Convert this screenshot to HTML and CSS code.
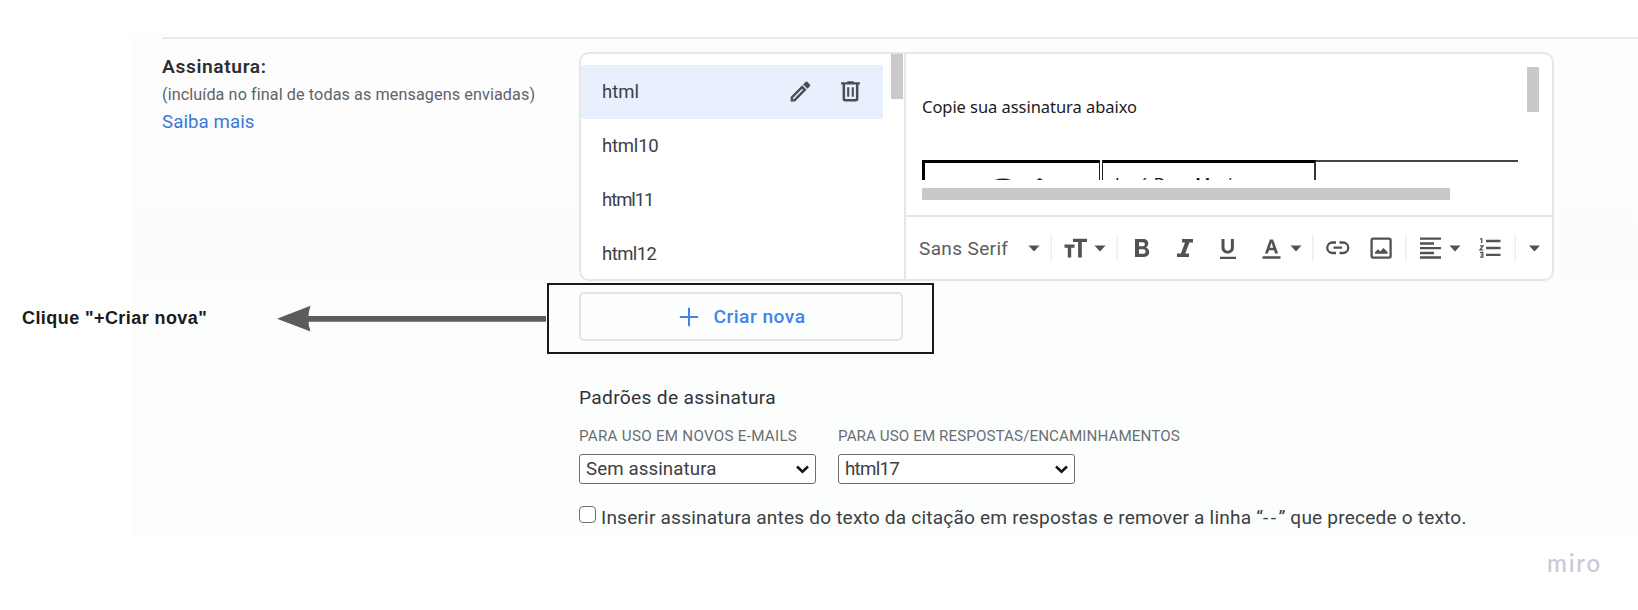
FILE: index.html
```html
<!DOCTYPE html>
<html lang="pt-BR">
<head>
<meta charset="utf-8">
<title>Assinatura</title>
<link rel="stylesheet" href="styles.css">
</head>
<body>
<main class="board">
  <section class="panel">
    <div class="settings">
      <div class="intro">
        <h2 class="intro-title">Assinatura:</h2>
        <p class="intro-note">(incluída no final de todas as mensagens enviadas)</p>
        <a class="intro-link">Saiba mais</a>
      </div>
      <div class="content">
        <div class="box">
          <div class="list">
            <ul class="names">
              <li class="name selected">html
                <span class="actions">
                  <svg class="act" viewBox="0 0 24 24"><path fill-rule="evenodd" d="M2.500 17.300V21.500h4.200L17.800 10.200l-4.200-4.200zM4.700 18.300l8.900-9 .9.900-8.900 9.200h-.9zM21 7a1.300 1.300 0 0 0 0-1.800l-2.300-2.300a1.300 1.300 0 0 0-1.800 0l-2.400 2.300 4.200 4.200z"/></svg>
                  <svg class="act" viewBox="0 0 24 24"><path fill-rule="evenodd" d="M15 3V2.200H9V3H3v2.300h1.400V19a2.500 2.500 0 0 0 2.500 2.500h10.200a2.500 2.500 0 0 0 2.500-2.500V5.300H21V3zM17.200 19.200H6.800V5.300h10.400zM8.800 8h2v9h-2zM13.200 8h2v9h-2z"/></svg>
                </span>
              </li>
              <li class="name ten">html10</li>
              <li class="name eleven">html11</li>
              <li class="name twelve">html12</li>
            </ul>
            <div class="list-thumb"></div>
          </div>
          <div class="editor">
            <div class="editor-body">
              <div class="view">
                <p class="copy">Copie sua assinatura abaixo</p>
                <div class="sheet">
                  <div class="cell logo"><svg viewBox="0 0 174 17" width="174" height="17"><path d="M70 17q8-2.800 16 0zM111.500 17l3.300-2 3 2z" fill="#222"/></svg></div>
                  <div class="cell person">José Braz Maria</div>
                  <div class="cell rest"></div>
                </div>
                <div class="h-thumb"></div>
              </div>
              <div class="v-thumb"></div>
            </div>
            <div class="toolbar">
              <span class="font-name">Sans Serif</span>
              <svg class="tools" viewBox="1020 217 532 62" width="532" height="62">
                <path fill="#eceef0" d="M1050.500 234.500h1.500v27h-1.500zM1116.500 234.500h1.500v27h-1.500zM1312 234.500h1.500v27H1312zM1405 234.500h1.500v27H1405zM1514.500 234.500h1.500v27h-1.500z"/>
                <g fill="#505254">
                  <path d="M1028.500 245.500h11l-5.500 6zM1094.500 245.500h11l-5.500 6zM1290.500 245.500h11l-5.500 6zM1449.500 245.500h11l-5.500 6zM1529 245.500h11l-5.500 6z"/>
                  <path d="M1073 238.700h14v3.400h-5.200V257.500h-3.700V242.100H1073zM1064.500 244.500h10v3.300h-3.300v9.700h-3.400v-9.700h-3.300z"/>
                  <path fill-rule="evenodd" d="M1135 239h8.200c3 0 5.100 1.900 5.100 4.600 0 1.700-.9 3.100-2.300 3.900 1.900.7 3.200 2.300 3.200 4.500 0 3-2.300 5-5.500 5H1135zM1139 242.200v4h3.700c1.300 0 2.200-.8 2.200-2s-.9-2-2.200-2zM1139 249.200v4.600h4.200c1.500 0 2.400-1 2.400-2.400s-.9-2.200-2.400-2.200z"/>
                  <path d="M1182 239h11v3.400h-3.600l-4.100 11.200h3.700v3.400h-12v-3.400h3.900l4.100-11.200h-3z"/>
                  <path d="M1221.500 239h3v8.200c0 2.200 1.200 3.500 3.200 3.500s3.200-1.300 3.200-3.500V239h3v8.300c0 3.900-2.400 6.300-6.200 6.300s-6.200-2.400-6.200-6.300zM1220 256.800h16v2.300h-16z"/>
                  <path fill-rule="evenodd" d="M1269.900 239.500h3.200l5 14h-3l-1.100-3.200h-5l-1.100 3.200h-3zM1269.800 247.800h3.400l-1.700-5.200zM1262.500 256.300h18v2.500h-18z"/>
                </g>
                <g fill="none" stroke="#505254" stroke-width="2.300">
                  <path d="M1336 242.500h-3.500a5.200 5.200 0 0 0 0 10.500h3.500M1339.500 242.500h3.500a5.200 5.200 0 0 1 0 10.500h-3.500M1333.500 247.700h8.500"/>
                  <rect x="1371.600" y="238.600" width="19" height="19" rx="1.500"/>
                  <path d="M1420 238.700h21M1420 243.500h14M1420 248.200h21M1420 253h14M1420 257.500h21M1486 241h14.500M1486 248h14.500M1486 254.800h14.500"/>
                </g>
                <path fill="#505254" d="M1375 253.800v-1.600l3-3 2.300 2.300 3.200-3.600 4 4.200v1.700z"/>
                <path fill="none" stroke="#505254" stroke-width="1.300" d="M1480 238.800h1.700v4.200M1480 245.900h3l-3 3.900h3.400M1480 252.500h2.800v2.300h-2 2v2.400h-2.800"/>
              </svg>
            </div>
          </div>
        </div>
        <button class="create"><svg width="20" height="20" viewBox="0 0 20 20"><path d="M10 .8v18.400M.8 10h18.400" stroke="#3f83ec" stroke-width="2"/></svg>Criar nova</button>
        <h3 class="defaults">Padrões de assinatura</h3>
        <div class="fields">
          <label class="field"><span class="caption">PARA USO EM NOVOS E-MAILS</span>
            <span class="select">Sem assinatura<svg width="13" height="9" viewBox="0 0 13 9"><path d="M1 1.500l5.500 5.200L12 1.500" fill="none" stroke="#111" stroke-width="2.500"/></svg></span></label>
          <label class="field"><span class="caption wide">PARA USO EM RESPOSTAS/ENCAMINHAMENTOS</span>
            <span class="select reply">html17<svg width="13" height="9" viewBox="0 0 13 9"><path d="M1 1.500l5.500 5.200L12 1.500" fill="none" stroke="#111" stroke-width="2.500"/></svg></span></label>
        </div>
        <label class="insert"><span class="check"></span><span>Inserir assinatura antes do texto da citação em respostas e remover a linha “<span class="dashes">--</span>” que precede o texto.</span></label>
      </div>
    </div>
  </section>
  <footer class="brand">miro</footer>
  <div class="note-label">Clique "+Criar nova"</div>
  <svg class="note-arrow" width="270" height="28" viewBox="0 0 270 28"><path d="M0 13.700L33.500 .8q-4.500 13 0 25.800zM31 11h238v5.700H31z" fill="#5c5c5c"/></svg>
  <div class="note-frame"></div>
</main>
</body>
</html>
```
FILE: styles.css
```css
* { box-sizing: border-box; }
body { margin: 0; background: #fff; font-family: Roboto, "Liberation Sans", sans-serif; color: #3c4043; white-space: nowrap; }
h2, h3, p, ul { margin: 0; padding: 0; font-weight: 400; }
.board { position: relative; width: 1638px; height: 610px; overflow: hidden; padding: 33px 0 0 131px; }
.panel { height: 505px; padding: 4px 0 0 31px; background: linear-gradient(#fdfdfd, #fcfcfc 48%, #fcfefe 53%, #fcfefe); }
.settings { display: flex; border-top: 2px solid #e9ebee; padding-top: 13px; }
.intro { width: 417px; padding-top: 1px; display: flex; flex-direction: column; line-height: 27px; }
.intro-title { font-size: 19.200px; font-weight: 600; letter-spacing: .62px; color: #2b2d30; }
.intro-note { padding-top: 1px; font-size: 16.200px; letter-spacing: .09px; color: #5f6368; }
.intro-link { padding-top: 1px; font-size: 18.700px; letter-spacing: .07px; color: #3c78d8; }
.content { width: 975px; }
.box { display: flex; height: 229px; border: 2px solid #e4e6e9; border-radius: 10px; background: #fff; overflow: hidden; }
.list { width: 325px; display: flex; justify-content: space-between; border-right: 2px solid #e4e6e9; }
.names { width: 302px; padding-top: 11px; list-style: none; font-size: 18.500px; }
.name { height: 53.900px; padding: 0 20px 0 21px; display: flex; align-items: center; justify-content: space-between; }
.selected { background: #e8f0fe; }
.ten { letter-spacing: -.2px; }
.eleven { letter-spacing: -1.050px; }
.twelve { letter-spacing: -.55px; }
.actions { display: flex; gap: 25px; }
.act { width: 25px; height: 25px; fill: #4a4d52; }
.list-thumb { width: 12px; height: 45px; margin-right: 1px; background: #c9c9c9; }
.editor { flex: 1; display: flex; flex-direction: column; }
.editor-body { height: 163px; padding: 13px 13px 0 16px; display: flex; justify-content: space-between; border-bottom: 2px solid #e4e6e9; }
.view { width: 596px; }
.copy { padding-top: 27px; font: 16.500px/26px "Noto Sans", sans-serif; letter-spacing: -.05px; color: #1b1b1f; }
.sheet { margin-top: 40px; height: 20px; display: flex; overflow: hidden; }
.cell { border-top: 3px solid #000; }
.logo { width: 178px; border-left: 3px solid #000; border-right: 1px solid #222; }
.person { width: 214px; margin-left: 2px; padding: 9px 0 0 12px; border-left: 1px solid #222; border-right: 2px solid #333; font: 17px/24px "Noto Sans", sans-serif; letter-spacing: .33px; color: #111; }
.rest { flex: 1; border-top: 2px solid #444; }
.h-thumb { width: 528px; height: 12px; margin-top: 8px; background: #c9c9c9; }
.v-thumb { width: 12px; height: 45px; background: #c9c9c9; }
.toolbar { height: 62px; display: flex; align-items: center; padding-left: 13px; }
.font-name { width: 101px; font-size: 19px; letter-spacing: .37px; color: #5a5d61; }
.tools { flex: none; display: block; }
.create { margin: 11px 0 0; padding: 0 0 0 3px; width: 324px; height: 49px; display: flex; align-items: center; justify-content: center; gap: 14px; background: #fdfefe; border: 2px solid #e2e4e7; border-radius: 5px; font: 500 19.200px Roboto, sans-serif; letter-spacing: .48px; color: #3f83ec; }
.defaults { margin-top: 43px; font-size: 19.200px; line-height: 28px; letter-spacing: .31px; color: #303337; }
.fields { display: flex; gap: 22px; margin-top: 13px; }
.field { width: 237px; }
.caption { display: block; height: 29px; font-size: 15.200px; line-height: 22px; letter-spacing: .26px; color: #6b6f74; }
.wide { letter-spacing: .07px; }
.select { display: flex; align-items: center; justify-content: space-between; height: 30px; padding: 0 6px; background: #fff; border: 1.500px solid #6e6e6e; border-radius: 3px; font-size: 18.700px; letter-spacing: .1px; }
.reply { letter-spacing: -.7px; }
.insert { display: flex; align-items: center; height: 28px; margin-top: 19px; font-size: 19.100px; letter-spacing: .185px; }
.dashes { letter-spacing: 2.400px; }
.check { width: 17px; height: 17px; margin: -5px 5px 0 0; border: 1.500px solid #6e6e6e; border-radius: 4px; background: #fff; }
.brand { position: absolute; left: 1547px; top: 549px; font: 500 24px/28px "Lato", sans-serif; letter-spacing: 1.800px; color: #c9c7d8; }
.note-label { position: absolute; left: 22px; top: 305px; font: bold 18px/26px "Liberation Sans", sans-serif; letter-spacing: .43px; color: #1a1a1a; }
.note-arrow { position: absolute; left: 277px; top: 305px; }
.note-frame { position: absolute; left: 547px; top: 283px; width: 387px; height: 71px; border: 2px solid #1a1a1a; }
```
